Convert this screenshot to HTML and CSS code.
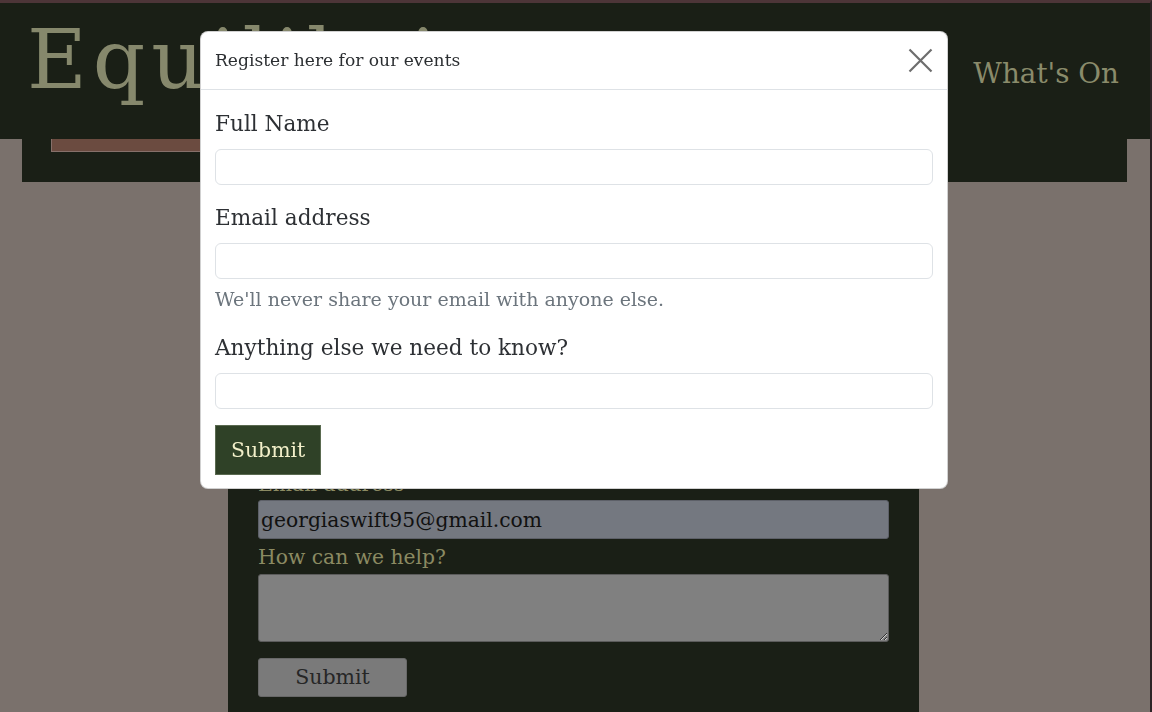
FILE: index.html
```html
<!DOCTYPE html>
<html lang="en">
<head>
<meta charset="utf-8">
<title>Equilibrium – Register</title>
<link rel="stylesheet" href="styles.css">
</head>
<body class="modal-open">
<div class="page">
  <header class="site-header">
    <a class="brand" href="#">Equilibrium</a>
    <nav class="site-nav">
      <a class="nav-link" href="#">What's On</a>
    </nav>
  </header>

  <section class="hero">
    <span class="hero-cta" aria-hidden="true"></span>
  </section>

  <section class="contact">
    <label class="contact-label contact-label--first" for="c-email">Email address</label>
    <input class="contact-input contact-input--filled" id="c-email" type="email" value="georgiaswift95@gmail.com">
    <label class="contact-label" for="c-msg">How can we help?</label>
    <textarea class="contact-textarea" id="c-msg"></textarea>
    <button class="contact-submit" type="button">Submit</button>
  </section>
</div>

<div class="modal" role="dialog" aria-modal="true" aria-labelledby="modal-title">
  <div class="modal-dialog">
    <div class="modal-header">
      <h5 class="modal-title" id="modal-title">Register here for our events</h5>
      <button class="modal-close" type="button" aria-label="Close">
        <svg width="25" height="25" viewBox="0 0 25 25" aria-hidden="true">
          <path d="M1.5 1.5 L23.5 23.5 M23.5 1.5 L1.5 23.5" stroke="#6d6d6d" stroke-width="2.2" fill="none" stroke-linecap="butt"/>
        </svg>
      </button>
    </div>
    <form class="modal-body">
      <div class="field">
        <label class="field-label" for="r-name">Full Name</label>
        <input class="field-input" id="r-name" type="text">
      </div>
      <div class="field">
        <label class="field-label" for="r-email">Email address</label>
        <input class="field-input" id="r-email" type="email">
        <div class="field-help">We'll never share your email with anyone else.</div>
      </div>
      <div class="field">
        <label class="field-label" for="r-notes">Anything else we need to know?</label>
        <input class="field-input" id="r-notes" type="text">
      </div>
      <button class="modal-submit" type="button">Submit</button>
    </form>
  </div>
</div>
</body>
</html>
```

FILE: styles.css
```css
* {
  box-sizing: border-box;
}

html,
body {
  margin: 0;
  padding: 0;
  height: 100%;
  overflow: hidden;
}

body {
  font-family: "DejaVu Serif", "Liberation Serif", serif;
  background: #7a716c;
}

.page {
  min-height: 100%;
  border-top: 3px solid #4d3538;
  border-right: 2px solid #2e2426;
  background: #7a716c;
}

/* ---------- site header ---------- */
.site-header {
  height: 136px;
  background: #1a1f16;
  display: flex;
  justify-content: space-between;
  align-items: flex-start;
  padding: 12px 31px 0 27px;
}

.brand {
  font-size: 82px;
  line-height: 90px;
  letter-spacing: 6px;
  color: #86886c;
  text-decoration: none;
  white-space: nowrap;
}

.site-nav {
  display: flex;
  gap: 48px;
  margin-top: 39px;
}

.nav-link {
  font-size: 27.8px;
  line-height: 40px;
  color: #8a8b6b;
  text-decoration: none;
  white-space: nowrap;
}

/* ---------- hero strip ---------- */
.hero {
  margin: 0 23px 0 22px;
  height: 43px;
  background: #1a1f16;
  padding-left: 29px;
}

.hero-cta {
  display: block;
  width: 320px;
  height: 13px;
  background: #6b4b40;
  border: 1px solid #86706a;
  border-top: 0;
}

/* ---------- contact panel ---------- */
.contact {
  width: 691px;
  margin: 253px 0 0 228px;
  background: #1a1f16;
  padding: 30px 30px 60px;
}

.contact-label {
  display: block;
  padding-top: 2px;
  font-size: 20.3px;
  line-height: 33px;
  color: #8b8a62;
}

.contact-label--first {
  padding-top: 3px;
  line-height: 32px;
}

.contact-input {
  display: block;
  width: 100%;
  height: 39px;
  padding: 0 2px;
  border: 1px solid #5d6068;
  border-radius: 3px;
  background: #808080;
  font-family: inherit;
  font-size: 20.3px;
  color: #111111;
}

.contact-input--filled {
  background: #747880;
}

.contact-textarea {
  display: block;
  width: 100%;
  height: 68px;
  margin-bottom: 16px;
  border: 1px solid #5b5b5b;
  border-radius: 3px;
  background: #808080;
  font-family: inherit;
  font-size: 20px;
}

.contact-submit {
  display: block;
  width: 149px;
  height: 39px;
  padding: 0;
  border: 1px solid #686868;
  border-radius: 3px;
  background: #7a7a7a;
  font-family: inherit;
  font-size: 20.5px;
  line-height: 37px;
  color: #262626;
}

/* ---------- modal ---------- */
.modal {
  position: fixed;
  inset: 0;
}

.modal-dialog {
  width: 748px;
  margin: 31px 0 0 200px;
  background: #ffffff;
  border: 1px solid rgba(0, 0, 0, 0.18);
  border-radius: 8px;
}

.modal-header {
  display: flex;
  align-items: center;
  justify-content: space-between;
  padding: 15px 14px;
  border-bottom: 1px solid #dee2e6;
}

.modal-title {
  margin: 0;
  font-size: 17.1px;
  line-height: 27px;
  font-weight: normal;
  color: #2b2e31;
}

.modal-close {
  width: 25px;
  height: 25px;
  padding: 0;
  border: 0;
  background: transparent;
  display: flex;
}

.modal-body {
  display: block;
  margin: 0;
  padding: 17px 14px 13px;
}

.field {
  margin-bottom: 16px;
}

.field-label {
  display: block;
  margin-bottom: 8px;
  font-size: 21.6px;
  line-height: 34px;
  color: #2d3034;
}

.field-input {
  display: block;
  width: 100%;
  height: 36px;
  border: 1px solid #dee2e6;
  border-radius: 6px;
  background: #ffffff;
  padding: 0 12px;
  font-family: inherit;
  font-size: 18px;
}

.field-help {
  margin-top: 4px;
  font-size: 19px;
  line-height: 32px;
  color: #6c757d;
}

.modal-submit {
  display: block;
  padding: 8px 15px;
  border: 1px solid #5a6a50;
  border-radius: 0;
  background: #2f4127;
  font-family: inherit;
  font-size: 20.4px;
  line-height: 32px;
  color: #f2efc9;
}
```
